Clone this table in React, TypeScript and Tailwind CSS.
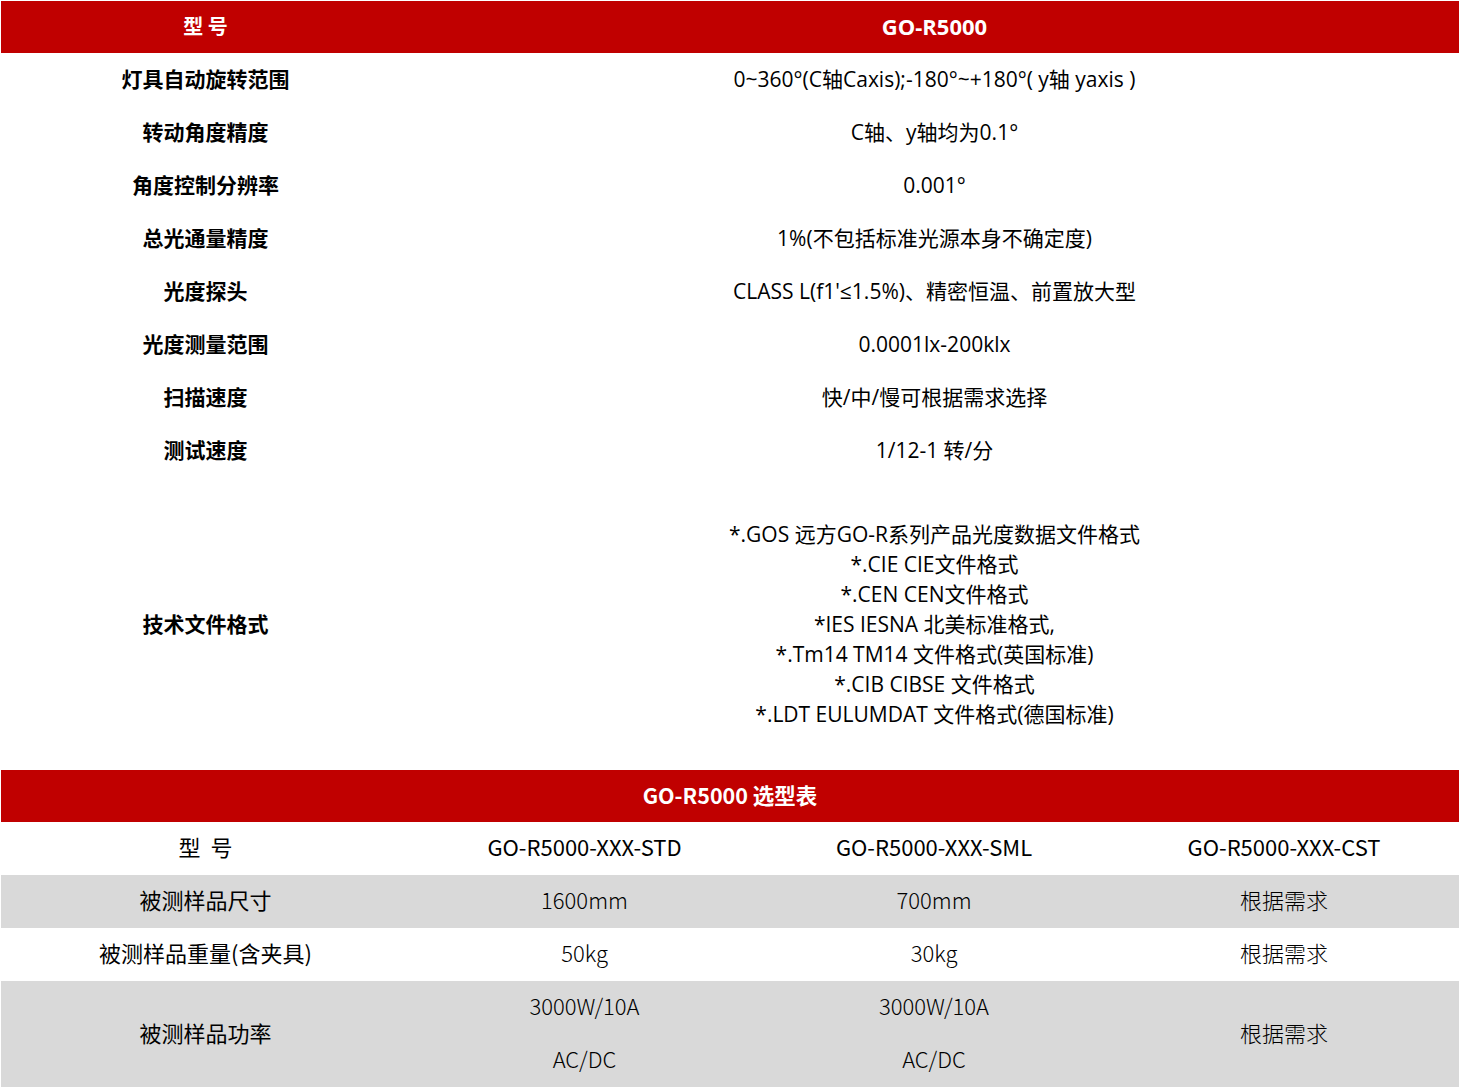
import React from 'react'

const specs: [string, string][] = [
  ['灯具自动旋转范围', '0~360°(C轴Caxis);-180°~+180°( y轴 yaxis )'],
  ['转动角度精度', 'C轴、y轴均为0.1°'],
  ['角度控制分辨率', '0.001°'],
  ['总光通量精度', '1%(不包括标准光源本身不确定度)'],
  ['光度探头', "CLASS L(f1'≤1.5%)、精密恒温、前置放大型"],
  ['光度测量范围', '0.0001lx-200klx'],
  ['扫描速度', '快/中/慢可根据需求选择'],
  ['测试速度', '1/12-1 转/分'],
]

const formats = [
  '*.GOS 远方GO-R系列产品光度数据文件格式',
  '*.CIE CIE文件格式',
  '*.CEN CEN文件格式',
  '*IES IESNA 北美标准格式,',
  '*.Tm14 TM14 文件格式(英国标准)',
  '*.CIB CIBSE 文件格式',
  '*.LDT EULUMDAT 文件格式(德国标准)',
]

const cjk = { fontFamily: '"Noto Sans CJK SC", sans-serif' }
const mixed = { fontFamily: '"Open Sans", "Noto Sans CJK SC", sans-serif' }

export default function App() {
  return (
    <div className="min-h-screen bg-white pl-px pt-px" style={cjk}>
      <div className="w-[1458px] text-black">
        {/* 参数表 */}
        <div className="grid h-[52px] grid-cols-[409px_1fr] items-center bg-[#c00000] pb-0.5 font-bold text-white">
          <div className="text-center text-[20px]">型 号</div>
          <div className="text-center text-[22px]" style={mixed}>GO-R5000</div>
        </div>
        {specs.map(([label, value]) => (
          <div key={label} className="grid h-[53px] grid-cols-[409px_1fr] items-center">
            <div className="-mt-0.5 text-center text-[21px] font-bold">{label}</div>
            <div className="text-center text-[21px]" style={mixed}>
              {value}
            </div>
          </div>
        ))}
        <div className="grid h-[293px] grid-cols-[409px_1fr] items-center">
          <div className="text-center text-[21px] font-bold">技术文件格式</div>
          <div className="flex flex-col items-center text-[21px] leading-[30px]" style={mixed}>
            {formats.map((f) => (
              <div key={f}>{f}</div>
            ))}
          </div>
        </div>

        {/* 选型表 */}
        <div className="flex h-[52px] items-center justify-center bg-[#c00000] pb-0.5 text-[21.5px] font-bold text-white">
          GO-R5000 选型表
        </div>
        <div className="grid grid-cols-[409px_349px_350px_350px] text-[22px]">
          <div className="flex h-[53px] items-center justify-center pb-1">型&nbsp;&nbsp;号</div>
          <div className="flex h-[53px] items-center justify-center pb-1">GO-R5000-XXX-STD</div>
          <div className="flex h-[53px] items-center justify-center pb-1">GO-R5000-XXX-SML</div>
          <div className="flex h-[53px] items-center justify-center pb-1">GO-R5000-XXX-CST</div>

          <div className="flex h-[53px] items-center justify-center bg-[#d9d9d9] pb-1">被测样品尺寸</div>
          <div className="flex h-[53px] items-center justify-center bg-[#d9d9d9] pb-1 font-light">1600mm</div>
          <div className="flex h-[53px] items-center justify-center bg-[#d9d9d9] pb-1 font-light">700mm</div>
          <div className="flex h-[53px] items-center justify-center bg-[#d9d9d9] pb-1 font-light">根据需求</div>

          <div className="flex h-[53px] items-center justify-center pb-1">被测样品重量(含夹具)</div>
          <div className="flex h-[53px] items-center justify-center pb-1 font-light">50kg</div>
          <div className="flex h-[53px] items-center justify-center pb-1 font-light">30kg</div>
          <div className="flex h-[53px] items-center justify-center pb-1 font-light">根据需求</div>

          <div className="flex h-[106px] items-center justify-center bg-[#d9d9d9] pb-1">被测样品功率</div>
          <div className="flex h-[106px] flex-col bg-[#d9d9d9] font-light">
            <div className="flex h-[53px] items-center justify-center pb-1">3000W/10A</div>
            <div className="flex h-[53px] items-center justify-center pb-1">AC/DC</div>
          </div>
          <div className="flex h-[106px] flex-col bg-[#d9d9d9] font-light">
            <div className="flex h-[53px] items-center justify-center pb-1">3000W/10A</div>
            <div className="flex h-[53px] items-center justify-center pb-1">AC/DC</div>
          </div>
          <div className="flex h-[106px] items-center justify-center bg-[#d9d9d9] pb-1 font-light">根据需求</div>
        </div>
      </div>
    </div>
  )
}
